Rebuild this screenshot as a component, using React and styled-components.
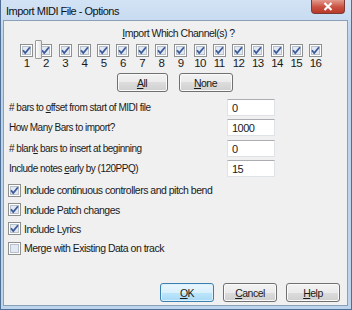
import React from "react";
import styled, { createGlobalStyle } from "styled-components";

const Global = createGlobalStyle`
  html, body { margin: 0; padding: 0; background: #c4d9ef; }
  body {
    font-family: "Liberation Sans", Arial, sans-serif;
    font-size: 10px;
    letter-spacing: -0.5px;
    color: #1a1a1a;
  }
`;

const Window = styled.div`
  width: 352px;
  height: 310px;
  box-sizing: border-box;
  border: 1px solid #4f6f96;
  border-top: none;
  background: linear-gradient(#d3e3f5, #bcd3ec 40px, #bdd4ed);
  display: flex;
  flex-direction: column;
  padding: 0 3px 3px 2px;
`;

const TitleBar = styled.div`
  height: 20px;
  display: flex;
  align-items: flex-start;
  justify-content: space-between;
`;

const Title = styled.div`
  font-size: 11px;
  padding: 5px 0 0 3px;
  color: #111;
`;

const Close = styled.div`
  width: 32px;
  height: 13px;
  margin-right: 3px;
  border: 1px solid #7a3a35;
  border-top: none;
  border-radius: 0 0 4px 4px;
  background: linear-gradient(#e39a8e, #c9503f 55%, #b8392a);
  display: flex;
  align-items: center;
  justify-content: center;
  svg { display: block; }
`;

const Client = styled.div`
  flex: 1;
  background: #f0f0f0;
  border: 1px solid #8a9fb8;
  display: flex;
  flex-direction: column;
`;

const Header = styled.div`
  text-align: center;
  margin: 6px 0 0 6px;
  height: 13px;
  line-height: 13px;
  font-size: 10.5px;
`;

const U = styled.span`
  text-decoration: underline;
`;

const Channels = styled.div`
  position: relative;
  display: grid;
  grid-template-columns: repeat(16, 19.27px);
  margin: 4px 0 0 13px;
`;

const Channel = styled.div`
  display: flex;
  flex-direction: column;
  align-items: center;
  font-size: 11.5px;
  line-height: 11px;
  gap: 1px;
`;

const Thumb = styled.div`
  position: absolute;
  left: 18px;
  top: -4px;
  width: 5px;
  height: 17px;
  border: 1px solid #9a9a9a;
  border-radius: 1px;
  background: linear-gradient(90deg, #fdfdfd, #e4e4e4);
`;

const BoxWrap = styled.span`
  width: 13px;
  height: 13px;
  display: inline-block;
  flex: none;
  svg { display: block; }
`;

function Box({ checked }) {
  return (
    <BoxWrap>
      <svg width="13" height="13" viewBox="0 0 13 13">
        <rect x="0.5" y="0.5" width="12" height="12" fill="#fff" stroke="#8e8f8f" />
        <rect x="2.5" y="2.5" width="8" height="8" fill="#e2e9f3" stroke="#b8c0cc" />
        {checked && (
          <path d="M3 6.3 L5.2 9 L10 3.2" fill="none" stroke="#3d5a9a" strokeWidth="1.8" />
        )}
      </svg>
    </BoxWrap>
  );
}

const Buttons = styled.div`
  display: flex;
  justify-content: center;
  gap: 11px;
  margin: 4px 0 0 -2px;
`;

const Button = styled.div`
  width: ${p => p.w}px;
  height: 19px;
  box-sizing: border-box;
  border: 1px solid ${p => (p.primary ? "#3c7fb1" : "#707070")};
  border-radius: 3px;
  background: ${p =>
    p.primary
      ? "linear-gradient(#eaf6fd, #d9f0fc 50%, #bee6fd 50%, #a7d9f5)"
      : "linear-gradient(#f2f2f2, #ebebeb 50%, #dddddd 50%, #cfcfcf)"};
  box-shadow: inset 0 0 0 1px ${p => (p.primary ? "#ddf1fc" : "#fafafa")};
  display: flex;
  align-items: center;
  justify-content: center;
  font-size: 10.5px;
`;

const Fields = styled.div`
  display: flex;
  flex-direction: column;
  gap: 3.3px;
  margin: 7px 0 0 5px;
`;

const Field = styled.div`
  display: grid;
  grid-template-columns: 218px 48px;
  align-items: center;
  height: 17px;
  font-size: 10px;
`;

const Input = styled.div`
  height: 17px;
  box-sizing: border-box;
  border: 1px solid #dfe3e8;
  border-top-color: #abadb3;
  background: #fff;
  padding: 1px 0 0 4px;
  line-height: 14px;
  font-size: 11px;
`;

const Checks = styled.div`
  display: flex;
  flex-direction: column;
  gap: 6.3px;
  margin: 7px 0 0 4px;
`;

const Check = styled.div`
  display: flex;
  align-items: center;
  gap: 3px;
  height: 13px;
  font-size: 10.5px;
`;

const Footer = styled.div`
  margin-top: auto;
  display: flex;
  justify-content: flex-end;
  gap: 9px;
  padding: 0 7px 3px 0;
`;

const fields = [
  [<># bars to <U>o</U>ffset from start of MIDI file</>, "0"],
  [<>How Many Bars to import?</>, "1000"],
  [<># blan<U>k</U> bars to insert at beginning</>, "0"],
  [<>Include notes <U>e</U>arly by (120PPQ)</>, "15"],
];

const checks = [
  ["Include continuous controllers and pitch bend", true],
  ["Include Patch changes", true],
  ["Include Lyrics", true],
  ["Merge with Existing Data on track", false],
];

export default function App() {
  return (
    <>
      <Global />
      <Window>
        <TitleBar>
          <Title>Import MIDI File - Options</Title>
          <Close>
            <svg width="10" height="9" viewBox="0 0 10 9">
              <path d="M1.5 1 L8.5 8 M8.5 1 L1.5 8" stroke="#fff" strokeWidth="2.2" />
            </svg>
          </Close>
        </TitleBar>
        <Client>
          <Header><U>I</U>mport Which Channel(s) ?</Header>
          <Channels>
            {Array.from({ length: 16 }, (_, i) => (
              <Channel key={i}>
                <Box checked />
                <span>{i + 1}</span>
              </Channel>
            ))}
            <Thumb />
          </Channels>
          <Buttons>
            <Button w={51}><U>A</U>ll</Button>
            <Button w={54}><U>N</U>one</Button>
          </Buttons>
          <Fields>
            {fields.map(([label, value], i) => (
              <Field key={i}>
                <span>{label}</span>
                <Input>{value}</Input>
              </Field>
            ))}
          </Fields>
          <Checks>
            {checks.map(([label, on]) => (
              <Check key={label}>
                <Box checked={on} />
                <span>{label}</span>
              </Check>
            ))}
          </Checks>
          <Footer>
            <Button w={54} primary><U>O</U>K</Button>
            <Button w={54}><U>C</U>ancel</Button>
            <Button w={54}><U>H</U>elp</Button>
          </Footer>
        </Client>
      </Window>
    </>
  );
}
